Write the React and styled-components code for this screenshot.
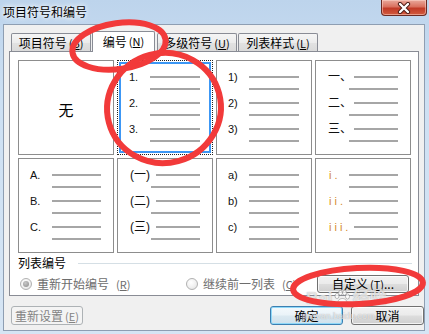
import React from 'react';
import styled, { createGlobalStyle, css } from 'styled-components';

const Global = createGlobalStyle`
  html, body { margin: 0; padding: 0; background: #fff; }
  body {
    font-family: "Noto Sans CJK SC", "Liberation Sans", sans-serif;
    font-size: 12px;
    color: #000;
  }
`;

const Window = styled.div`
  position: relative;
  width: 429px;
  height: 334px;
  overflow: hidden;
  box-sizing: border-box;
  padding: 0 4px 3px 3px;
  display: flex;
  flex-direction: column;
  background: linear-gradient(180deg, #bdd4ec 0%, #cde0f3 30%, #d6e5f4 100%);
`;

const TitleBar = styled.div`
  height: 24px;
  flex: none;
  display: flex;
  align-items: flex-start;
  justify-content: space-between;
`;

const Title = styled.div`
  margin-top: 4px;
  line-height: 16px;
  font-size: 12px;
  color: #000;
  text-shadow: 0 0 4px #fff, 0 0 6px #fff;
`;

const CloseButton = styled.div`
  width: 46px;
  height: 16px;
  margin-right: -2px;
  box-sizing: border-box;
  border: 1px solid #6b2a22;
  border-top: none;
  border-radius: 0 0 4px 4px;
  background: linear-gradient(180deg, #e9a99c 0%, #d9705e 45%, #c13a27 55%, #d25b3e 100%);
  box-shadow: inset 0 0 0 1px rgba(255, 220, 210, 0.5);
  display: flex;
  align-items: center;
  justify-content: center;
`;

const Body = styled.div`
  flex: 1;
  display: flex;
  flex-direction: column;
  box-sizing: border-box;
  background: #f0f0f0;
  border: 1px solid #8e9eb2;
  padding: 6px 0 0 5px;
`;

const TabRow = styled.div`
  display: flex;
  align-items: flex-end;
  height: 21px;
  margin: 0 0 -1px 2px;
  position: relative;
  z-index: 1;
`;

const Tab = styled.div`
  box-sizing: border-box;
  width: ${p => p.$w}px;
  margin-left: ${p => p.$ml}px;
  height: ${p => (p.$active ? 21 : 18)}px;
  margin-bottom: ${p => (p.$active ? 0 : 1)}px;
  padding-bottom: ${p => (p.$active ? 2 : 0)}px;
  border: 1px solid #898c95;
  border-bottom: none;
  border-radius: 2px 2px 0 0;
  background: ${p => (p.$active ? '#fff' : 'linear-gradient(180deg, #f5f5f5 0%, #ececec 50%, #e2e2e2 51%, #dadada 100%)')};
  display: flex;
  align-items: center;
  justify-content: center;
  font-size: 12px;
  white-space: nowrap;
`;

const Mn = styled.span`
  font-size: 11px;
  margin-left: 2px;
  letter-spacing: 0;
  & u { text-underline-offset: 1px; }
`;

const Panel = styled.div`
  box-sizing: border-box;
  height: 245px;
  margin-right: 5px;
  border: 1px solid #898c95;
  background: #fff;
  padding: 8px 6px 0 8px;
  display: flex;
  flex-direction: column;
`;

const Grid = styled.div`
  display: grid;
  grid-template-columns: repeat(4, 96px);
  grid-auto-rows: 95px;
  gap: 3px;
`;

const Box = styled.div`
  box-sizing: border-box;
  border: 1px solid #8d8d8d;
  background: #fff;
  display: flex;
  flex-direction: column;
  gap: 2px;
  padding: 10px 12px 0 0;
  ${p => p.$selected && css`
    border: 1px dotted #222;
    box-shadow: inset 0 0 0 1px #fff, inset 0 0 0 3px #3c97f5;
  `}
  ${p => p.$center && css`
    align-items: center;
    justify-content: center;
    padding: 4px 0 0 0;
  `}
`;

const NoneText = styled.span`
  font-size: 15px;
  line-height: 16px;
`;

const Item = styled.div`
  display: flex;
  flex-direction: column;
`;

const ItemRow = styled.div`
  display: flex;
  align-items: center;
  height: 12px;
  padding-left: ${p => p.$pad}px;
`;

const Label = styled.span`
  flex: none;
  width: ${p => p.$w}px;
  font-family: "Liberation Sans", "Noto Sans CJK SC", sans-serif;
  font-size: ${p => (p.$cjk ? 12 : 11)}px;
  line-height: 12px;
  white-space: nowrap;
  color: ${p => (p.$orange ? '#d48a2c' : '#111')};
  letter-spacing: ${p => (p.$orange ? 3 : 0)}px;
`;

const Line = styled.span`
  flex: 1;
  height: 2px;
  background: #a6a6a6;
`;

const GroupHeader = styled.div`
  margin-top: 2px;
  height: 16px;
  display: flex;
  align-items: center;
  padding-right: 0;
`;

const GroupLabel = styled.span`
  font-size: 12px;
  line-height: 16px;
`;

const GroupLine = styled.span`
  flex: 1;
  height: 1px;
  margin-left: 12px;
  background: #d5dfe5;
`;

const OptionsRow = styled.div`
  margin-top: 3px;
  height: 19px;
  display: grid;
  grid-template-columns: 166px 131px 92px;
  align-items: center;
  padding-left: 2px;
`;

const Option = styled.label`
  display: flex;
  align-items: center;
  gap: 5px;
  color: #6d6d6d;
  font-size: 12px;
  white-space: nowrap;
`;

const Radio = styled.span`
  box-sizing: border-box;
  width: 12px;
  height: 12px;
  border-radius: 50%;
  border: 1px solid #b1b1b1;
  background: radial-gradient(circle at 40% 35%, #ffffff 0%, #f0f0f0 55%, #dcdcdc 100%);
  display: flex;
  align-items: center;
  justify-content: center;
  &::after {
    content: '';
    display: ${p => (p.$checked ? 'block' : 'none')};
    width: 6px;
    height: 6px;
    border-radius: 50%;
    background: radial-gradient(circle at 40% 35%, #c8c8c8, #8a8a8a);
  }
`;

const Button = styled.button`
  box-sizing: border-box;
  width: ${p => p.$w}px;
  height: ${p => p.$h || 19}px;
  padding: 0;
  margin: 0;
  font-family: "Noto Sans CJK SC", "Liberation Sans", sans-serif;
  font-size: 12px;
  line-height: 16px;
  color: #000;
  border: 1px solid #707070;
  border-radius: 3px;
  background: linear-gradient(180deg, #f2f2f2 0%, #ebebeb 48%, #dddddd 52%, #cfcfcf 100%);
  box-shadow: inset 0 0 0 1px rgba(255, 255, 255, 0.75);
  display: flex;
  align-items: center;
  justify-content: center;
  white-space: nowrap;
  ${p => p.$default && css`
    border-color: #3c7fb1;
    box-shadow: inset 0 0 0 1px #8fd8f8;
    background: linear-gradient(180deg, #f4f9fc 0%, #eaf3f8 48%, #dbe9f1 52%, #cfe1ec 100%);
  `}
  ${p => p.$disabled && css`
    border-color: #adb2b5;
    background: #f4f4f4;
    box-shadow: none;
    color: #838383;
  `}
`;

const Footer = styled.div`
  margin-top: 10px;
  display: flex;
  align-items: center;
  padding-left: 2px;
  gap: 8px;
`;

const Spacer = styled.div`
  flex: 1;
`;

const Overlay = styled.svg`
  position: absolute;
  left: 0;
  top: 0;
  width: 429px;
  height: 334px;
  pointer-events: none;
  z-index: 10;
`;

const Watermark = styled.div`
  position: absolute;
  left: 306px;
  top: 290px;
  z-index: 9;
  pointer-events: none;
  display: flex;
  flex-direction: column;
  align-items: flex-start;
  color: rgba(255, 255, 255, 0.7);
  text-shadow: 0 0 1px rgba(120, 120, 120, 0.7);
`;

const WatermarkLogo = styled.div`
  display: flex;
  align-items: center;
  font-family: "Liberation Sans", "Noto Sans CJK SC", sans-serif;
  font-weight: bold;
  font-size: 17px;
  line-height: 17px;
  gap: 1px;
`;

const WatermarkUrl = styled.div`
  font-family: "Liberation Sans", sans-serif;
  font-size: 9px;
  line-height: 10px;
  margin-top: 4px;
  margin-left: -4px;
`;

const styles = [
  { none: true },
  { items: ['1.', '2.', '3.'], lx: 12, l1: [33, 33, 33], l2: 33, selected: true },
  { items: ['1)', '2)', '3)'], lx: 12, l1: [33, 33, 33], l2: 33 },
  { items: ['一、', '二、', '三、'], lx: 13, l1: [39, 39, 39], l2: 34, cjk: true },
  { items: ['A.', 'B.', 'C.'], lx: 12, l1: [34, 34, 34], l2: 34 },
  { items: ['(一)', '(二)', '(三)'], lx: 13, l1: [39, 39, 39], l2: 34, cjk: true },
  { items: ['a)', 'b)', 'c)'], lx: 12, l1: [33, 33, 33], l2: 33 },
  { items: ['i.', 'ii.', 'iii.'], lx: 14, l1: [34, 34, 39], l2: 34, orange: true },
];

const Mnemonic = ({ k }) => (
  <Mn>(<u>{k}</u>)</Mn>
);

const Preview = ({ s }) => {
  if (s.none) {
    return (
      <Box $center>
        <NoneText>无</NoneText>
      </Box>
    );
  }
  return (
    <Box $selected={s.selected}>
      {s.items.map((label, i) => (
        <Item key={label}>
          <ItemRow $pad={s.lx - 1}>
            <Label $w={s.l1[i] - s.lx} $cjk={s.cjk} $orange={s.orange}>{label}</Label>
            <Line />
          </ItemRow>
          <ItemRow $pad={s.l2 - 1}>
            <Line />
          </ItemRow>
        </Item>
      ))}
    </Box>
  );
};

export default function App() {
  return (
    <>
      <Global />
      <Window>
        <TitleBar>
          <Title>项目符号和编号</Title>
          <CloseButton>
            <svg width="14" height="12" viewBox="0 0 14 12">
              <path d="M3 2 L11 10 M11 2 L3 10" stroke="#4a1a14" strokeWidth="4.2" strokeLinecap="round" />
              <path d="M3 2 L11 10 M11 2 L3 10" stroke="#fff" strokeWidth="2.4" strokeLinecap="round" />
            </svg>
          </CloseButton>
        </TitleBar>
        <Body>
          <TabRow>
            <Tab $w={80} $ml={0}>项目符号<Mnemonic k="B" /></Tab>
            <Tab $w={63} $ml={1} $active>编号<Mnemonic k="N" /></Tab>
            <Tab $w={80} $ml={2}>多级符号<Mnemonic k="U" /></Tab>
            <Tab $w={80} $ml={1}>列表样式<Mnemonic k="L" /></Tab>
          </TabRow>
          <Panel>
            <Grid>
              {styles.map((s, i) => (
                <Preview key={i} s={s} />
              ))}
            </Grid>
            <GroupHeader>
              <GroupLabel>列表编号</GroupLabel>
              <GroupLine />
            </GroupHeader>
            <OptionsRow>
              <Option><Radio $checked />重新开始编号<Mnemonic k="R" /></Option>
              <Option><Radio />继续前一列表<Mnemonic k="C" /></Option>
              <Button $w={92} $h={18}>自定义<Mnemonic k="T" />...</Button>
            </OptionsRow>
          </Panel>
          <Footer>
            <Button $w={72} $disabled>重新设置<Mnemonic k="E" /></Button>
            <Spacer />
            <Button $w={73} $default>确定</Button>
            <Button $w={73}>取消</Button>
          </Footer>
        </Body>
        <Watermark>
          <WatermarkLogo>
            <span>Bai</span>
            <svg width="18" height="17" viewBox="0 0 18 17">
              <g fill="rgba(255,255,255,0.75)" stroke="rgba(120,120,120,0.6)" strokeWidth="0.8">
                <ellipse cx="4" cy="6" rx="2" ry="2.6" />
                <ellipse cx="7.5" cy="2.8" rx="2" ry="2.4" />
                <ellipse cx="11.5" cy="2.8" rx="2" ry="2.4" />
                <ellipse cx="14.5" cy="6.5" rx="2" ry="2.6" />
                <path d="M4.5 14 C4.5 10 7 8.5 9.5 8.5 C12 8.5 14.5 10.5 14 14 C13.5 16 11 15.5 9.5 15.5 C8 15.5 4.5 16.5 4.5 14 Z" />
              </g>
            </svg>
            <span>经验</span>
          </WatermarkLogo>
          <WatermarkUrl>jingyan.baidu.com</WatermarkUrl>
        </Watermark>
        <Overlay viewBox="0 0 429 334">
          <g fill="none" stroke="#f23a3a" strokeWidth="6">
            <ellipse cx="119" cy="46" rx="47" ry="23" transform="rotate(-8 119 46)" />
            <ellipse cx="164" cy="108" rx="57" ry="55" transform="rotate(-15 164 108)" />
            <ellipse cx="358" cy="286" rx="65" ry="18" transform="rotate(-3 358 286)" />
          </g>
        </Overlay>
      </Window>
    </>
  );
}
